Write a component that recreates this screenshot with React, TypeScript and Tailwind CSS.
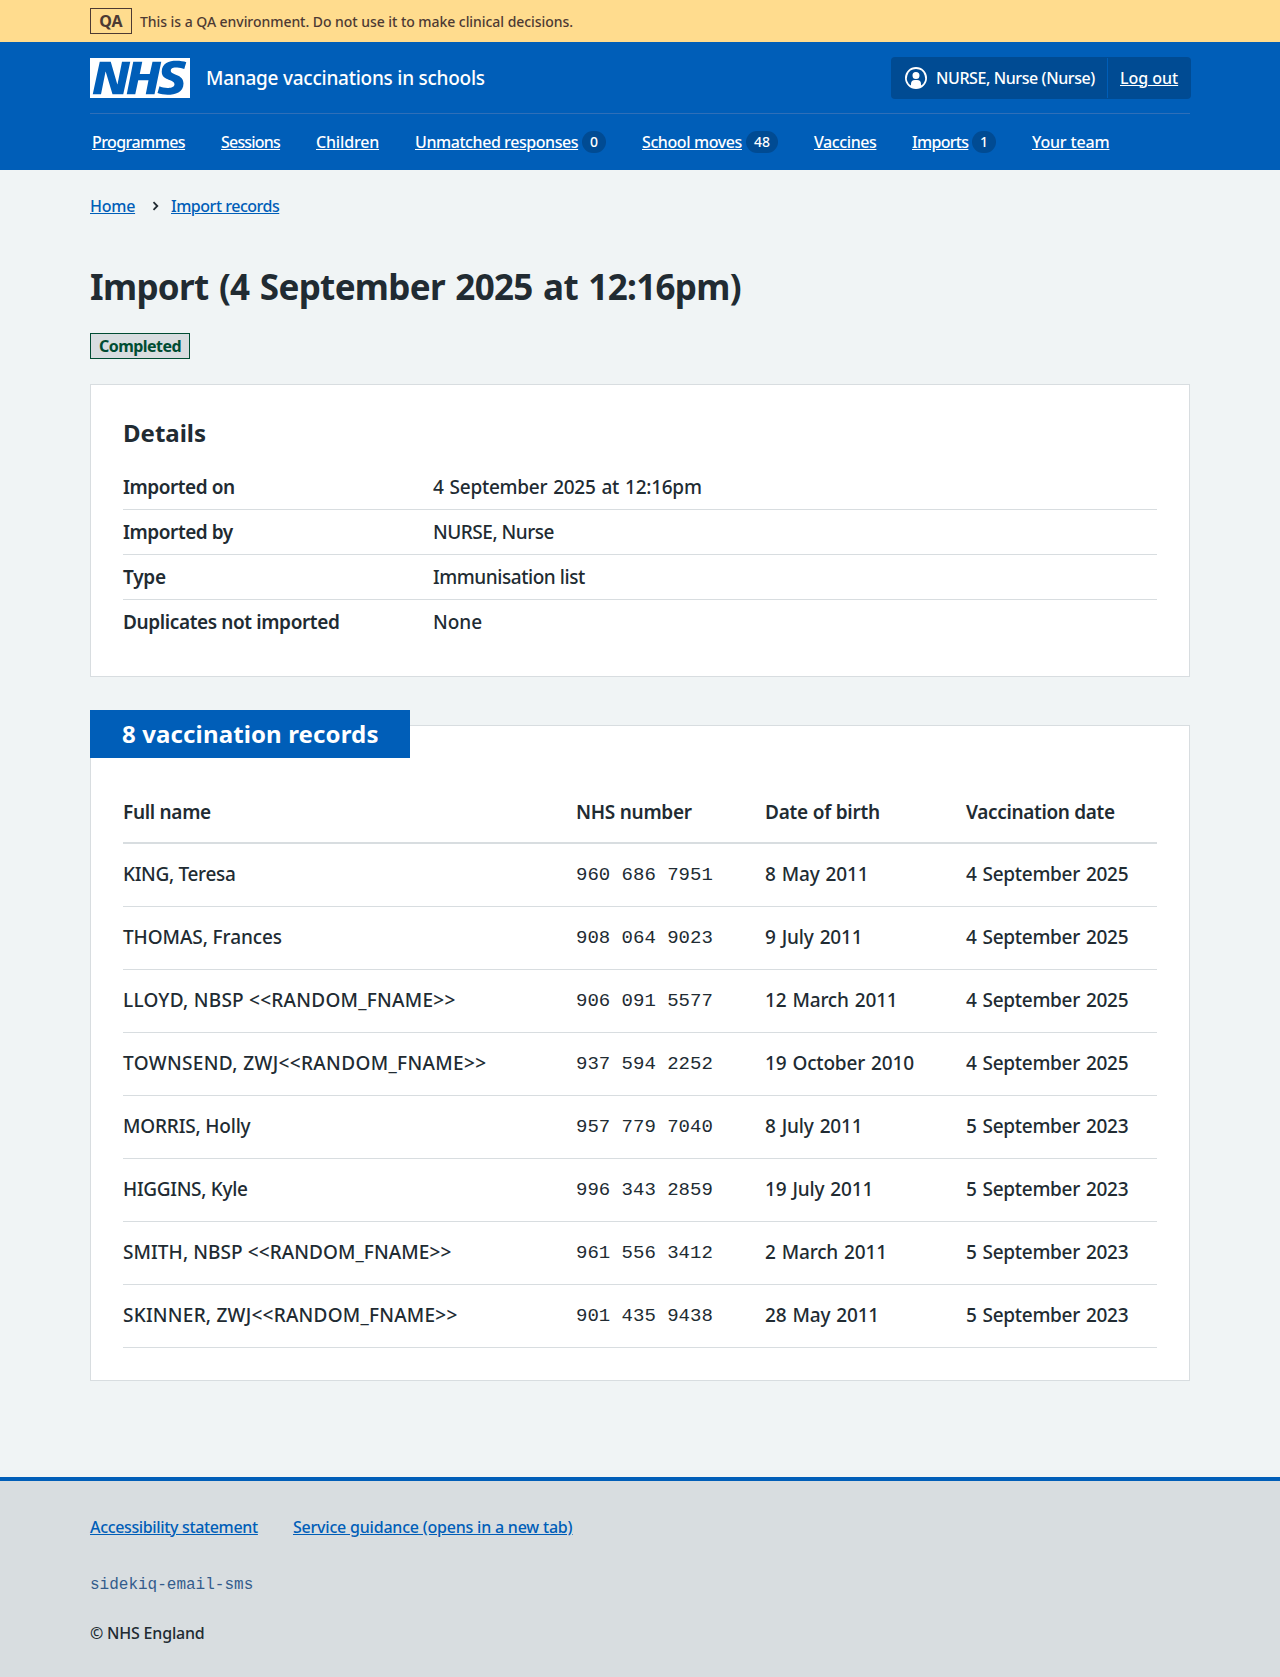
const NAV = [
  { label: "Programmes", cls: "w-[93px] tracking-[-0.57px]" },
  { label: "Sessions", cls: "w-[59px] tracking-[-0.8px]" },
  { label: "Children", cls: "w-[63px] tracking-[-0.17px]" },
  { label: "Unmatched responses", cls: "w-[163px] tracking-[-0.43px]", count: "0", badge: "w-6" },
  { label: "School moves", cls: "w-[100px] tracking-[-0.4px]", count: "48", badge: "w-8" },
  { label: "Vaccines", cls: "w-[62px] tracking-[-0.41px]" },
  { label: "Imports", cls: "w-[56px] tracking-[-0.69px]", count: "1", badge: "w-6" },
  { label: "Your team", cls: "w-[77px] tracking-[-0.16px]" },
];

const DETAILS = [
  { key: "Imported on", keyCls: "tracking-[-0.46px]", value: "4 September 2025 at 12:16pm", valueCls: "tracking-[-0.27px] [word-spacing:1.3px]" },
  { key: "Imported by", keyCls: "tracking-[-0.45px]", value: "NURSE, Nurse", valueCls: "tracking-[-0.48px]" },
  { key: "Type", keyCls: "tracking-[-0.24px]", value: "Immunisation list", valueCls: "tracking-[-0.45px]" },
  { key: "Duplicates not imported", keyCls: "tracking-[-0.38px]", value: "None", valueCls: "tracking-normal" },
];

const COLUMNS = [
  { label: "Full name", cls: "tracking-[-0.3px]" },
  { label: "NHS number", cls: "tracking-[-0.28px]" },
  { label: "Date of birth", cls: "tracking-[-0.23px]" },
  { label: "Vaccination date", cls: "tracking-[-0.34px]" },
];

const RECORDS = [
  { name: "KING, Teresa", cls: "tracking-[-0.32px]", nhs: "960 686 7951", dob: "8 May 2011", date: "4 September 2025" },
  { name: "THOMAS, Frances", cls: "tracking-[-0.08px]", nhs: "908 064 9023", dob: "9 July 2011", date: "4 September 2025" },
  { name: "LLOYD, NBSP <<RANDOM_FNAME>>", cls: "tracking-[0.25px]", nhs: "906 091 5577", dob: "12 March 2011", date: "4 September 2025" },
  { name: "TOWNSEND, ZWJ<<RANDOM_FNAME>>", cls: "tracking-[0.35px]", nhs: "937 594 2252", dob: "19 October 2010", date: "4 September 2025" },
  { name: "MORRIS, Holly", cls: "tracking-[-0.18px]", nhs: "957 779 7040", dob: "8 July 2011", date: "5 September 2023" },
  { name: "HIGGINS, Kyle", cls: "tracking-[-0.32px]", nhs: "996 343 2859", dob: "19 July 2011", date: "5 September 2023" },
  { name: "SMITH, NBSP <<RANDOM_FNAME>>", cls: "tracking-[0.08px]", nhs: "961 556 3412", dob: "2 March 2011", date: "5 September 2023" },
  { name: "SKINNER, ZWJ<<RANDOM_FNAME>>", cls: "tracking-[0.23px]", nhs: "901 435 9438", dob: "28 May 2011", date: "5 September 2023" },
];

const GRID = "grid grid-cols-[453px_189px_201px_1fr]";

function Banner() {
  return (
    <div className="h-[42px] bg-[#ffdc8e] text-[#4d3a33]">
      <div className="mx-auto flex h-full w-[1100px] items-center">
        <strong className="flex h-[26px] w-[42px] items-center justify-center border border-[#4d3a33] text-base leading-6 font-bold">
          QA
        </strong>
        <span className="mt-0.5 ml-2 text-sm leading-6 font-medium tracking-[-0.05px]">
          This is a QA environment. Do not use it to make clinical decisions.
        </span>
      </div>
    </div>
  );
}

function Header() {
  return (
    <header className="h-32 bg-[#005eb8] text-white">
      <div className="mx-auto w-[1100px]">
        <div className="flex h-[72px] items-center border-b border-[#2f6fb8]">
          <svg className="block h-10 w-[100px]" viewBox="0 0 200 80" aria-label="NHS">
            <path
              fill="#fff"
              d="M200 0v80H0V0h200Zm-27.5 5.5c-14.5 0-29 5-29 22 0 10.2 7.7 13.5 14.7 16.3l.7.3c5.4 2 10.1 3.9 10.1 8.4 0 6.5-8.5 7.5-14 7.5s-12.5-1.5-16-3.5L135 70c5.5 2 13.5 3.5 20 3.5 15.5 0 32-4.5 32-22.5 0-19.5-25.5-16.5-25.5-25.5 0-5.5 5.5-6.5 12.5-6.5a35 35 0 0 1 14.5 3l4-13.5c-4.5-2-12-3-20-3Zm-131 2h-22l-14 65H22l9-45h.5l13.5 45h21.5l14-65H64l-9 45h-.5l-13-45Zm63 0h-18l-13 65h17l6-28H117l-5.5 28H129l13.5-65H125L119.5 32h-20l5-24.5Z"
            />
          </svg>
          <span className="ml-4 text-[19px] leading-7 font-medium tracking-[-0.25px]">
            Manage vaccinations in schools
          </span>
          <div className="-mr-px ml-auto flex h-[42px] items-center rounded bg-[#004b93] text-base leading-6 font-medium">
            <div className="flex h-10 w-[217px] items-center border-r border-[#005eb8] pl-[13px]">
              <svg className="h-6 w-6" viewBox="0 0 24 24" fill="#fff" fillRule="evenodd">
                <path d="M12 1a11 11 0 1 1 0 22 11 11 0 0 1 0-22Zm0 2a9 9 0 0 0-5 16.5V18a4 4 0 0 1 4-4h2a4 4 0 0 1 4 4v1.5A9 9 0 0 0 12 3Zm0 3a3.5 3.5 0 1 1-3.5 3.5A3.4 3.4 0 0 1 12 6Z" />
              </svg>
              <span className="ml-2 whitespace-nowrap tracking-[-0.41px]">NURSE, Nurse (Nurse)</span>
            </div>
            <a className="w-[83px] pl-3 underline tracking-[-0.03px]">Log out</a>
          </div>
        </div>
        <nav className="flex h-14 items-center gap-9 pl-0.5 text-base leading-6 font-medium">
          {NAV.map((item) => (
            <div key={item.label} className="flex items-center">
              <a className={`whitespace-nowrap underline ${item.cls}`}>{item.label}</a>
              {item.count && (
                <span
                  className={`ml-1 flex h-[22px] items-center justify-center rounded-full bg-[#004b93] text-sm leading-5 font-medium ${item.badge}`}
                >
                  {item.count}
                </span>
              )}
            </div>
          ))}
        </nav>
      </div>
    </header>
  );
}

function DetailsCard() {
  return (
    <section className="mt-[25px] h-[293px] border border-[#d8dde0] bg-white px-8 pt-[30px]">
      <h2 className="text-2xl leading-9 font-bold tracking-[-0.01px]">Details</h2>
      <dl className="mt-3.5 text-[19px] leading-7">
        {DETAILS.map((row) => (
          <div key={row.key} className="flex h-[45px] border-b border-[#d8dde0] pt-2 last:border-b-0">
            <dt className={`w-[310px] font-semibold ${row.keyCls}`}>{row.key}</dt>
            <dd className={`font-medium ${row.valueCls}`}>{row.value}</dd>
          </div>
        ))}
      </dl>
    </section>
  );
}

function RecordsCard() {
  return (
    <section className="mt-12 h-[656px] border border-[#d8dde0] bg-white px-8">
      <h2 className="-mt-4 -ml-[33px] h-12 w-80 bg-[#005eb8] pl-8 text-2xl leading-[48px] font-bold tracking-[0.13px] whitespace-nowrap text-white">
        8 vaccination records
      </h2>
      <div className="mt-10 text-[19px] leading-7">
        <div className={`${GRID} h-[46px] border-b-2 border-[#d8dde0] font-semibold`}>
          {COLUMNS.map((column) => (
            <span key={column.label} className={column.cls}>
              {column.label}
            </span>
          ))}
        </div>
        {RECORDS.map((record) => (
          <div key={record.nhs} className={`${GRID} h-[63px] border-b border-[#d8dde0] pt-4 font-medium`}>
            <span className={record.cls}>{record.name}</span>
            <span className="mt-px font-['Liberation_Mono',monospace] font-normal">{record.nhs}</span>
            <span className="tracking-[-0.18px] [word-spacing:1.3px]">{record.dob}</span>
            <span className="tracking-[-0.29px] [word-spacing:1.3px]">{record.date}</span>
          </div>
        ))}
      </div>
    </section>
  );
}

function Footer() {
  return (
    <footer className="mt-24 h-[200px] border-t-4 border-[#005eb8] bg-[#d8dde0] pt-[34px] text-base leading-6">
      <div className="mx-auto w-[1100px]">
        <div className="flex gap-[37px] font-medium text-[#005eb8] underline">
          <a className="w-[166px] whitespace-nowrap tracking-[-0.35px]">Accessibility statement</a>
          <a className="tracking-[-0.21px]">Service guidance (opens in a new tab)</a>
        </div>
        <p className="mt-[34px] font-['Liberation_Mono',monospace] text-[#335c8c]">sidekiq-email-sms</p>
        <p className="mt-6 font-medium tracking-[-0.2px]">© NHS England</p>
      </div>
    </footer>
  );
}

export default function App() {
  return (
    <div className="min-h-[1677px] bg-[#f0f4f5] font-['Noto_Sans',sans-serif] text-[#212b32]">
      <Banner />
      <Header />
      <main className="mx-auto w-[1100px] pt-6">
        <div className="flex h-6 items-center text-base leading-6 font-medium text-[#005eb8]">
          <a className="w-[45px] whitespace-nowrap underline tracking-[-0.25px]">Home</a>
          <svg className="mr-4 ml-[17px] h-2.5 w-[7px]" viewBox="0 0 7 10" fill="none" stroke="#212b32" strokeWidth="1.8">
            <path d="M1.5 1.2l3.8 3.8-3.8 3.8" />
          </svg>
          <a className="-ml-1 whitespace-nowrap underline tracking-[-0.48px]">Import records</a>
        </div>
        <h1 className="mt-[45px] text-[35px] leading-[48px] font-bold tracking-[-0.68px] whitespace-nowrap [word-spacing:2px]">
          Import (4 September 2025 at 12:16pm)
        </h1>
        <strong className="mt-[22px] flex h-[26px] w-[100px] items-center justify-center border border-[#004c33] bg-[#d8dde0] text-base leading-6 font-bold tracking-[-0.54px] text-[#004c33]">
          Completed
        </strong>
        <DetailsCard />
        <RecordsCard />
      </main>
      <Footer />
    </div>
  );
}
